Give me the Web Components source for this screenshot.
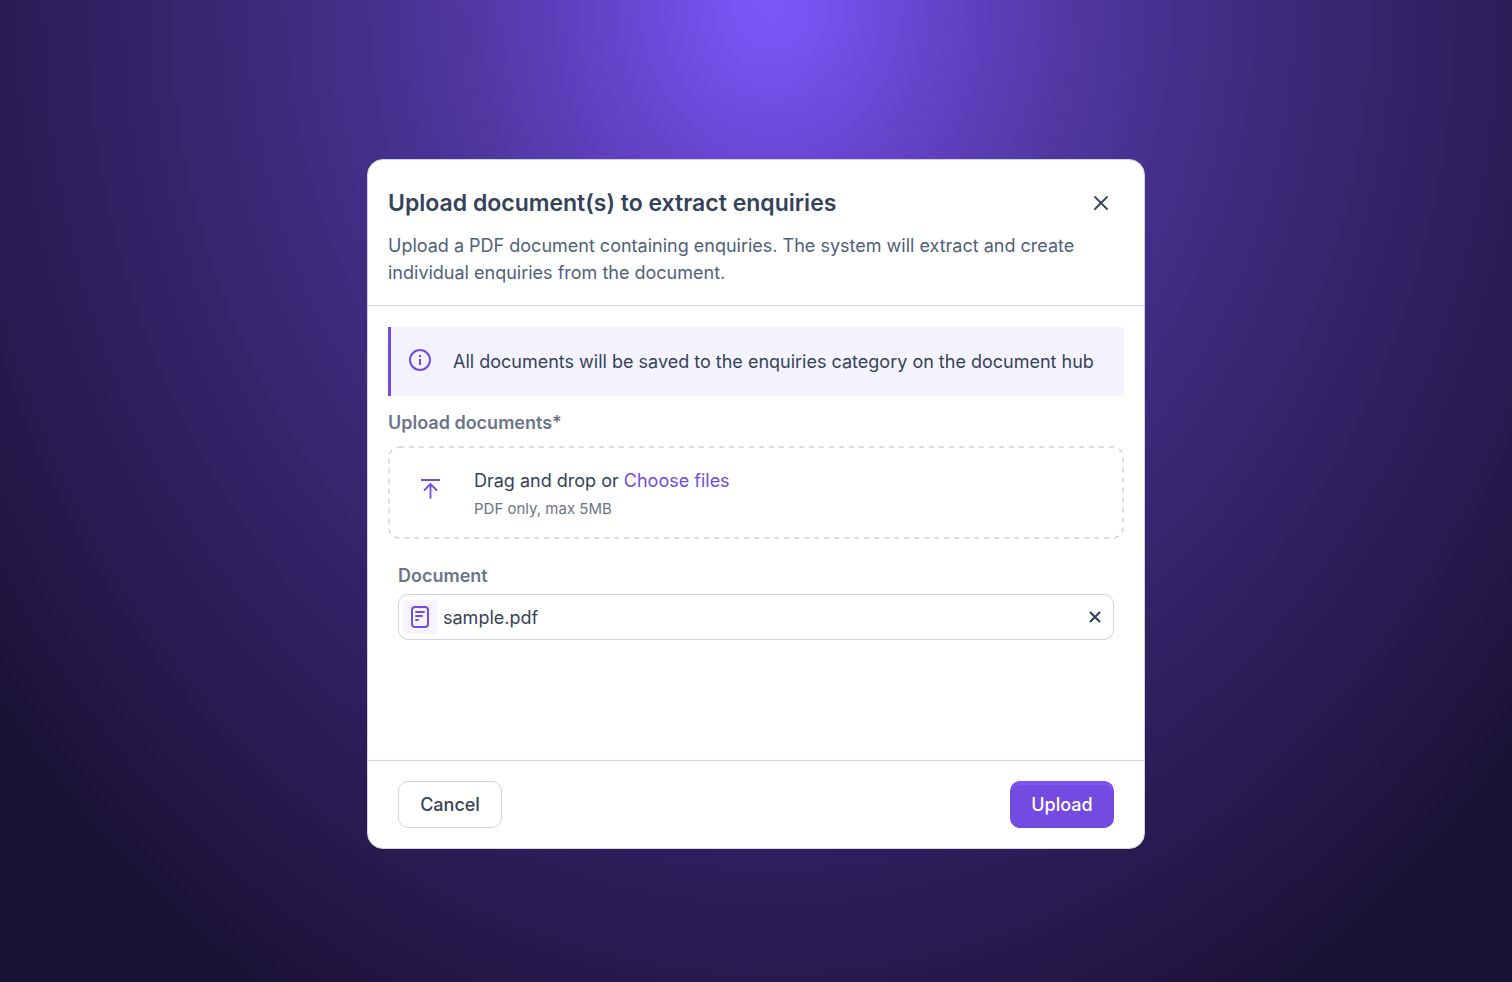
<!DOCTYPE html>
<html lang="en">
<head>
<meta charset="utf-8">
<meta name="viewport" content="width=device-width, initial-scale=1">
<title>Upload documents</title>
<style>
  body {
    margin: 0;
    font-family: Inter, "Liberation Sans", sans-serif;
    --ink: #34435a;
    --ink-soft: #505f79;
    --muted: #6c7489;
    --line: #cdd3e3;
    --accent: #734ae2;
    --accent-light: #7c55f4;
    --tint: #f5f3ff;
    color: var(--ink);
    font-size: 18px;
    line-height: 27px;
  }
</style>
</head>
<body>
<upload-stage>
  <upload-dialog>
    <span slot="title">Upload document(s) to extract enquiries</span>
    <span slot="description">Upload a PDF document containing enquiries. The system will extract and create individual enquiries from the document.</span>
    <info-banner>All documents will be saved to the enquiries category on the document hub</info-banner>
    <file-drop label="Upload documents*" hint="PDF only, max 5MB"></file-drop>
    <document-field label="Document" value="sample.pdf"></document-field>
    <action-button slot="actions">Cancel</action-button>
    <action-button slot="actions" primary>Upload</action-button>
  </upload-dialog>
</upload-stage>

<script>
class UploadStage extends HTMLElement {
  constructor() {
    super();
    this.attachShadow({ mode: "open" });
    this.shadowRoot.innerHTML = `
      <style>
        :host {
          display: flex;
          align-items: center;
          justify-content: center;
          box-sizing: border-box;
          min-height: 100vh;
          padding: 50px 24px 24px;
          background: radial-gradient(64% 118% at 51% 0,
            #7c56f5 0%, #7a54f2 4%, #734ee6 8%, #6b48d6 13%, #5f40bf 21%, #5239a4 30%,
            #483393 38%, #3f2d82 48%, #372770 59%, #2f2162 70%, #291c54 80%, #221745 91%, #1a1136 100%);
        }
      </style>
      <slot></slot>
    `;
  }
}

class UploadDialog extends HTMLElement {
  constructor() {
    super();
    this.attachShadow({ mode: "open" });
    this.shadowRoot.innerHTML = `
      <style>
        :host {
          display: block;
          width: 100%;
          max-width: 778px;
          box-sizing: border-box;
          background: #fff;
          border: 1px solid var(--line);
          border-radius: 16px;
        }
        header {
          padding: 27px 20px 19px;
          border-bottom: 1px solid var(--line);
        }
        .top {
          display: flex;
          align-items: center;
          justify-content: space-between;
          padding-right: 12px;
          margin-bottom: 13px;
        }
        h1 {
          margin: 0;
          font-size: 23px;
          line-height: 32px;
          font-weight: 600;
        }
        p {
          margin: 0;
          color: var(--ink-soft);
        }
        button {
          display: flex;
          padding: 4px;
          border: 0;
          background: none;
          color: inherit;
          cursor: pointer;
        }
        .body {
          display: flex;
          flex-direction: column;
          box-sizing: border-box;
          min-height: 454px;
          padding: 21px 20px 20px;
        }
        footer {
          display: flex;
          justify-content: space-between;
          padding: 20px 30px;
          border-top: 1px solid var(--line);
        }
      </style>
      <header>
        <div class="top">
          <h1><slot name="title"></slot></h1>
          <button type="button" aria-label="Close">
            <svg width="14" height="14" viewBox="0 0 14 14" fill="none" stroke="currentColor" stroke-width="1.8" stroke-linecap="round">
              <path d="M1 1l12 12M13 1L1 13"/>
            </svg>
          </button>
        </div>
        <p><slot name="description"></slot></p>
      </header>
      <div class="body"><slot></slot></div>
      <footer><slot name="actions"></slot></footer>
    `;
  }
}

class InfoBanner extends HTMLElement {
  constructor() {
    super();
    this.attachShadow({ mode: "open" });
    this.shadowRoot.innerHTML = `
      <style>
        :host {
          display: flex;
          align-items: flex-start;
          gap: 21px;
          padding: 21px 17px;
          border-left: 3px solid var(--accent);
          background: var(--tint);
        }
        svg {
          flex: none;
          color: var(--accent);
        }
      </style>
      <svg width="24" height="24" viewBox="0 0 24 24" fill="none" stroke="currentColor" stroke-width="2">
        <circle cx="12" cy="12" r="10"/>
        <path d="M12 11v6M12 7v2"/>
      </svg>
      <span><slot></slot></span>
    `;
  }
}

class FileDrop extends HTMLElement {
  constructor() {
    super();
    this.attachShadow({ mode: "open" });
    this.shadowRoot.innerHTML = `
      <style>
        :host {
          display: block;
          margin-top: 13px;
        }
        .title {
          font-weight: 600;
          color: var(--muted);
        }
        .zone {
          display: flex;
          align-items: center;
          gap: 32px;
          position: relative;
          margin-top: 10px;
          padding: 21px 32px 17px;
        }
        .outline {
          position: absolute;
          inset: 0;
          width: 100%;
          height: 100%;
          overflow: visible;
          pointer-events: none;
          stroke: var(--line);
        }
        .outline rect {
          x: 1px;
          y: 1px;
          width: calc(100% - 2px);
          height: calc(100% - 2px);
        }
        .arrow {
          flex: none;
          color: var(--accent);
          margin-bottom: 12px;
        }
        input {
          position: absolute;
          width: 1px;
          height: 1px;
          opacity: 0;
        }
        .choose {
          color: var(--accent);
          cursor: pointer;
        }
        .hint {
          margin-top: 1px;
          font-size: 15px;
          color: var(--muted);
        }
      </style>
      <div class="title"></div>
      <div class="zone">
        <svg class="outline" fill="none" stroke-width="1.5" stroke-dasharray="5 5">
          <rect rx="10"/>
        </svg>
        <svg class="arrow" width="22" height="22" viewBox="0 0 22 22" fill="none" stroke="currentColor" stroke-width="1.8">
          <path d="M1 2h19M10.5 20.5v-14M4 12.5L10.5 6l6.500 6.500"/>
        </svg>
        <div>
          <div>Drag and drop or <label class="choose" for="files">Choose files</label></div>
          <div class="hint"></div>
        </div>
        <input id="files" type="file" accept="application/pdf" multiple>
      </div>
    `;
    this.shadowRoot.querySelector(".title").textContent = this.getAttribute("label");
    this.shadowRoot.querySelector(".hint").textContent = this.getAttribute("hint");
  }
}

class DocumentField extends HTMLElement {
  constructor() {
    super();
    this.attachShadow({ mode: "open" });
    this.shadowRoot.innerHTML = `
      <style>
        :host {
          display: block;
          margin: 23px 10px 0;
        }
        label {
          display: block;
          font-weight: 600;
          color: var(--muted);
          margin-bottom: 5px;
        }
        .field {
          display: flex;
          align-items: center;
          gap: 6px;
          padding: 5px 8px 5px 4px;
          border: 1px solid var(--line);
          border-radius: 10px;
        }
        .file {
          display: flex;
          padding: 6px 8px;
          border-radius: 4px;
          background: var(--tint);
          color: var(--accent);
        }
        input {
          flex: 1;
          min-width: 0;
          padding: 0;
          border: 0;
          outline: 0;
          background: none;
          font: inherit;
          color: inherit;
        }
        button {
          display: flex;
          padding: 4px;
          border: 0;
          background: none;
          color: inherit;
          cursor: pointer;
        }
      </style>
      <label for="name"></label>
      <div class="field">
        <span class="file">
          <svg width="18" height="22" viewBox="0 0 18 22" fill="none" stroke="currentColor" stroke-width="2" stroke-linecap="round">
            <rect x="1" y="1" width="16" height="20" rx="3"/>
            <path d="M5 6h8M5 10h6M5 14h2" stroke-width="1.8"/>
          </svg>
        </span>
        <input id="name" type="text" readonly>
        <button type="button" aria-label="Remove document">
          <svg width="12" height="12" viewBox="0 0 12 12" fill="none" stroke="currentColor" stroke-width="2.2">
            <path d="M1 1l10 10M11 1L1 11"/>
          </svg>
        </button>
      </div>
    `;
    this.shadowRoot.querySelector("label").textContent = this.getAttribute("label");
    this.shadowRoot.querySelector("input").value = this.getAttribute("value");
  }
}

class ActionButton extends HTMLElement {
  constructor() {
    super();
    this.attachShadow({ mode: "open" });
    this.shadowRoot.innerHTML = `
      <style>
        :host {
          display: block;
        }
        button {
          min-width: 104px;
          padding: 9px 20px;
          border: 1px solid var(--line);
          border-radius: 10px;
          background: #fff;
          font: inherit;
          font-weight: 500;
          color: var(--ink);
          cursor: pointer;
        }
        :host([primary]) button {
          border-color: var(--accent);
          background: var(--accent);
          box-shadow: inset 0 3px 0 var(--accent-light);
          border-top-color: var(--accent-light);
          color: #fff;
        }
      </style>
      <button type="button"><slot></slot></button>
    `;
  }
}

customElements.define("upload-stage", UploadStage);
customElements.define("upload-dialog", UploadDialog);
customElements.define("info-banner", InfoBanner);
customElements.define("file-drop", FileDrop);
customElements.define("document-field", DocumentField);
customElements.define("action-button", ActionButton);
</script>
</body>
</html>
